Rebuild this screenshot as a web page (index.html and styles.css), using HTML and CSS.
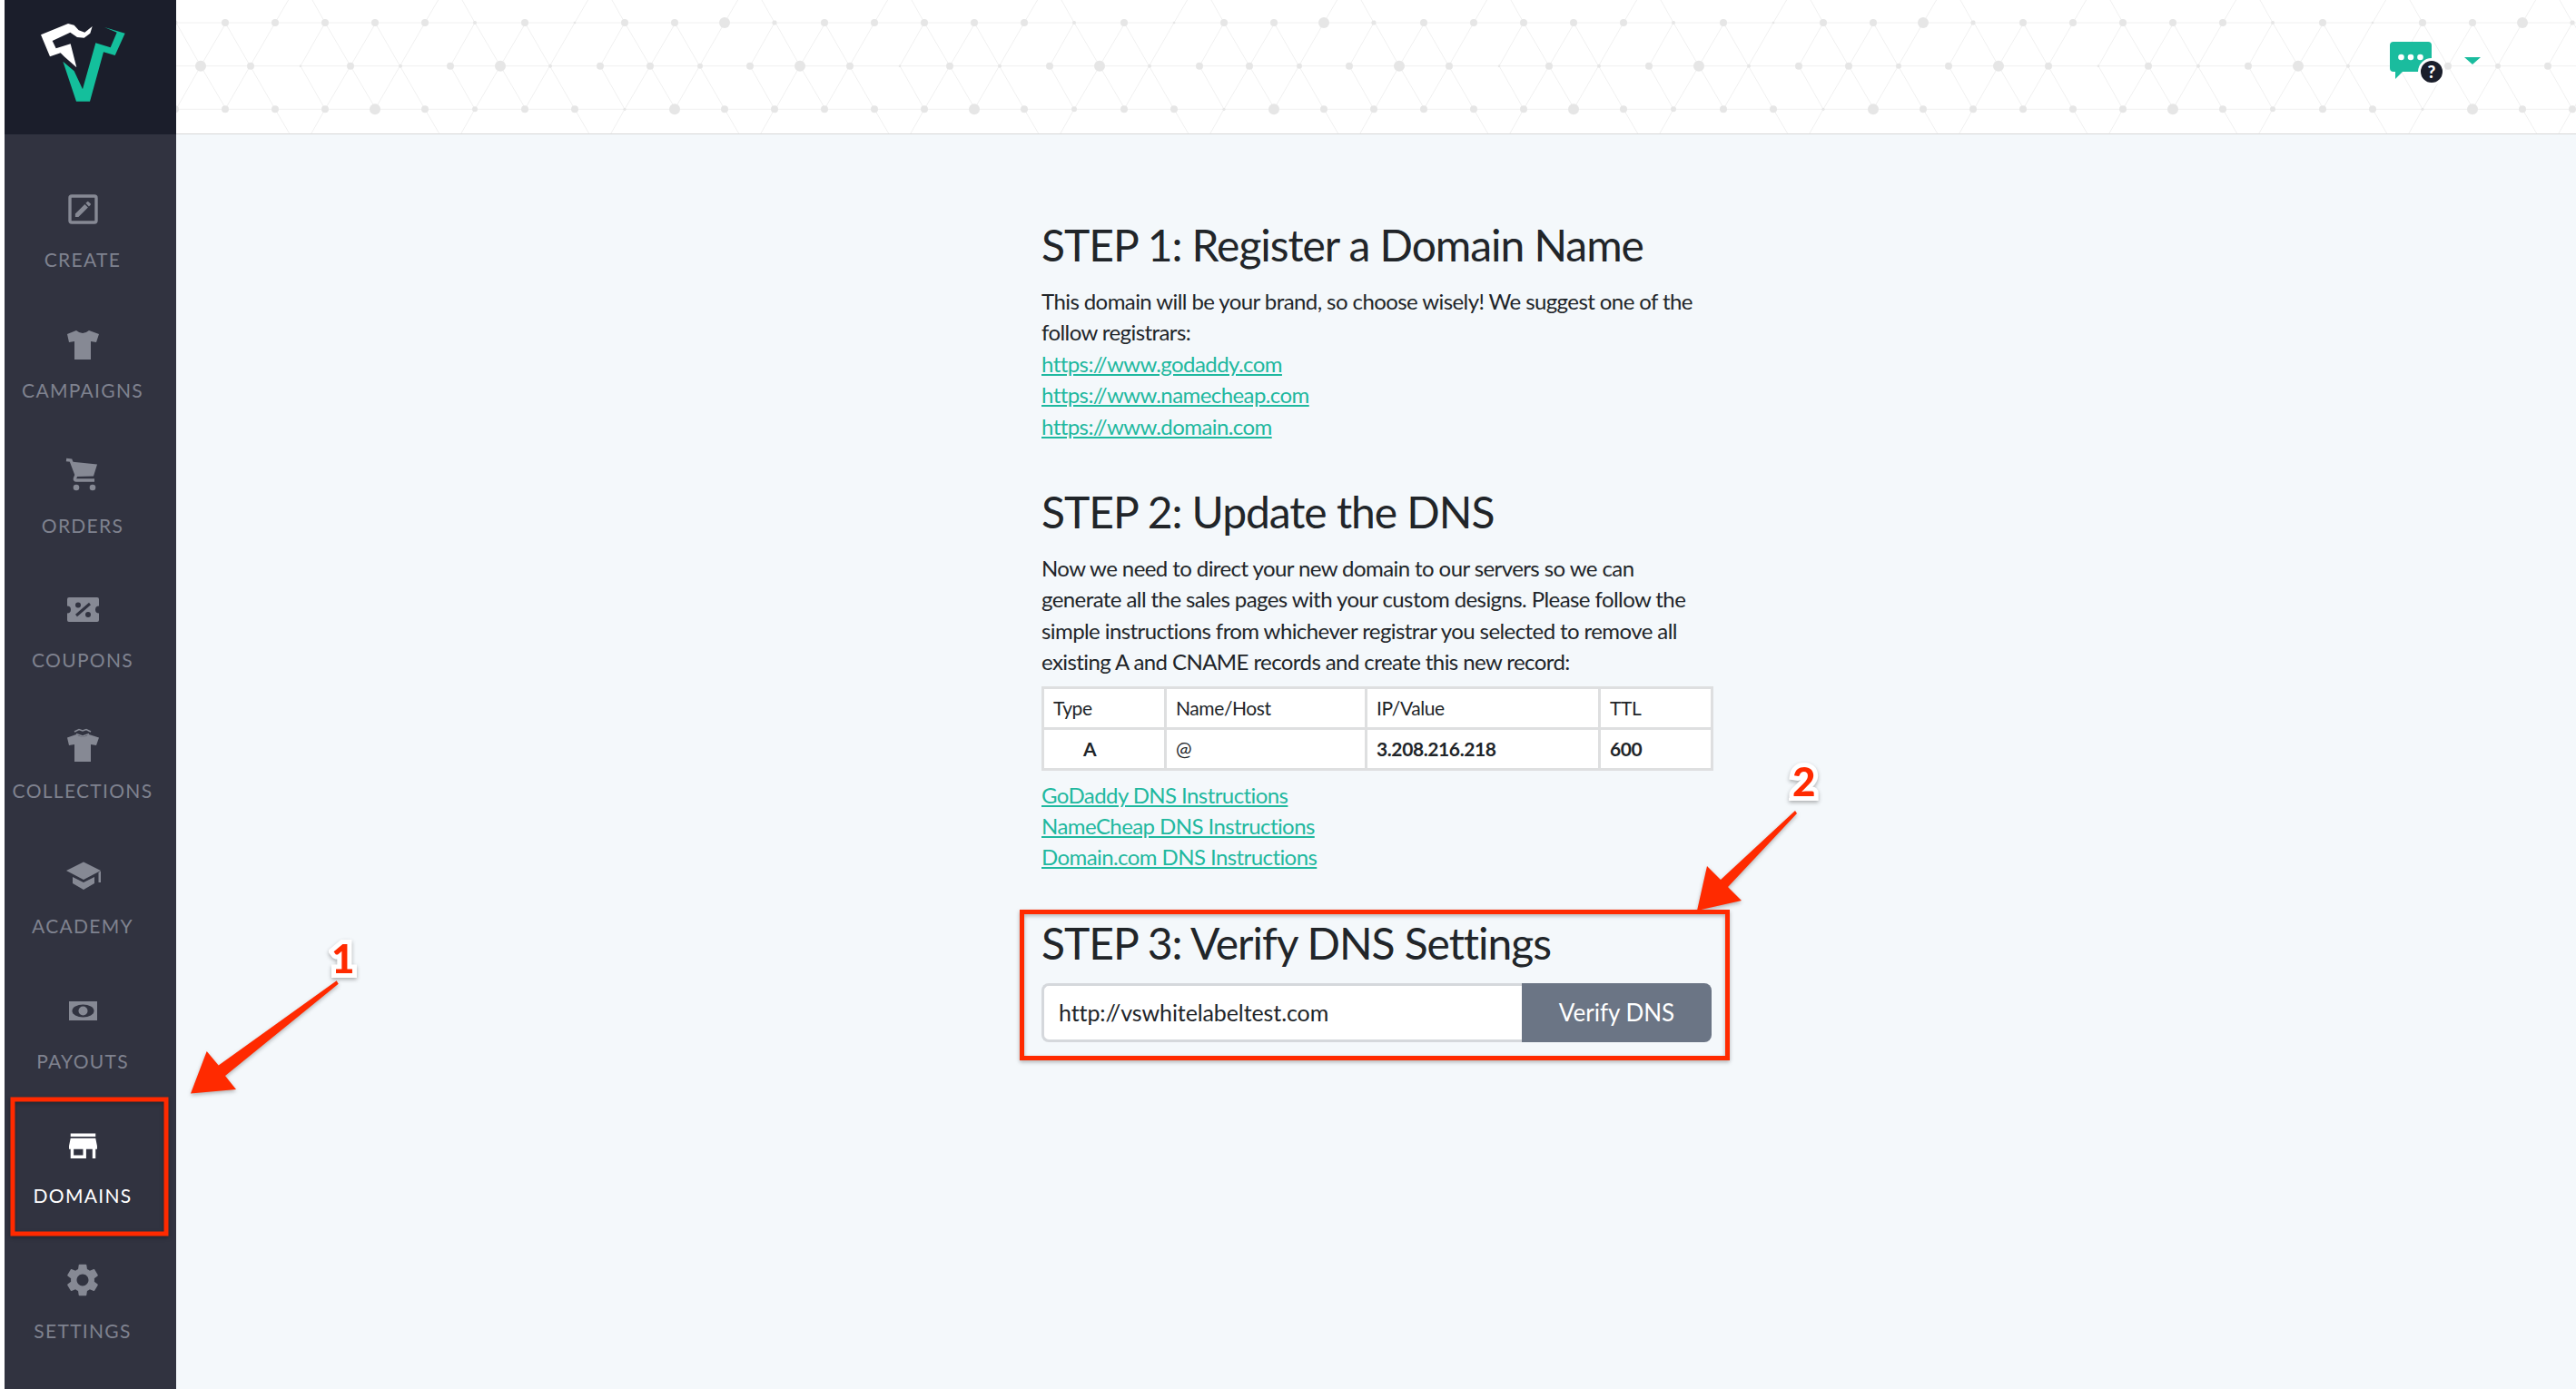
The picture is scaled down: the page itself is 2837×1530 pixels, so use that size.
FILE: index.html
```html
<!DOCTYPE html>
<html lang="en">
<head>
<meta charset="utf-8">
<title>Domains</title>
<link rel="stylesheet" href="styles.css">
</head>
<body>
<div class="app">
  <aside class="sidebar">
    <div class="brand">
      <svg class="logo" viewBox="0 0 360 330" aria-hidden="true">
        <path class="logo-white" d="M45 70L135 33L155 38L170 55L190 62L215 42L208 65L188 80L165 78L142 62L83 90L95 115L143 100L163 178L122 142L110 130L75 142Z"/>
        <path class="logo-green" d="M255 45L323 65L290 138L252 127L207 290L162 290L118 158L155 190L183 250L226 97L275 112L296 62Z"/>
      </svg>
    </div>
    <nav class="nav">
      <a class="nav-item">
        <svg class="icon" viewBox="0 0 44 44"><rect class="i-line" x="8" y="8" width="29" height="29" rx="2"/><path transform="translate(11 11) scale(.95)" d="M3 17.25V21h3.75L17.81 9.94l-3.75-3.75L3 17.25zM20.71 7.04a1 1 0 0 0 0-1.41l-2.34-2.34a1 1 0 0 0-1.41 0l-1.83 1.83 3.75 3.75 1.83-1.83z"/></svg>
        <span>CREATE</span>
      </a>
      <a class="nav-item short">
        <svg class="icon" viewBox="0 0 44 44"><path d="M15 12L5 16L7 25L13 24V44H31V24L37 25L40 16L29 12Q22 18 15 12Z"/></svg>
        <span>CAMPAIGNS</span>
      </a>
      <a class="nav-item">
        <svg class="icon" viewBox="0 0 44 44"><path d="M9 7.5L38 10.5L34 23.5L15 24Z"/><path class="i-line" d="M4 5.5L9 6L15 22L13.5 26Q13 28 15 28H35"/><circle cx="15" cy="36" r="3.3"/><circle cx="33" cy="36" r="3.3"/></svg>
        <span>ORDERS</span>
      </a>
      <a class="nav-item">
        <svg class="icon" viewBox="0 0 44 44"><path d="M7 9H38Q40 9 40 11V18.5A4 4 0 0 0 40 26.5V34Q40 36 38 36H7Q5 36 5 34V26.5A4 4 0 0 0 5 18.5V11Q5 9 7 9Z"/><path class="i-cut" d="M15 29L30 16"/><circle class="i-hole" cx="17" cy="17.5" r="3"/><circle class="i-hole" cx="28" cy="28" r="3"/></svg>
        <span>COUPONS</span>
      </a>
      <a class="nav-item short">
        <svg class="icon" viewBox="0 0 44 44"><path d="M15 16L5 19.5L7 28L13 27V46H31V27L37 28L40 19.5L29 16Q22 21 15 16Z"/><path class="i-thin" d="M13 13L18 10.500L22 12L26 10.500L31 13M15 15.500L22 18L29 15.500"/></svg>
        <span>COLLECTIONS</span>
      </a>
      <a class="nav-item">
        <svg class="icon" viewBox="0 0 44 44"><path d="M23 7.500L42 17L23 27L4 17Z"/><path d="M11 24L23 30L35 24V31L23 38L11 31Z"/><path d="M39.500 19L42 17.500V30H39.500Z"/></svg>
        <span>ACADEMY</span>
      </a>
      <a class="nav-item">
        <svg class="icon" viewBox="0 0 44 44"><rect x="7" y="12" width="31" height="21"/><ellipse class="i-hole" cx="22.500" cy="22.500" rx="12" ry="7"/><circle cx="22.500" cy="22.500" r="5"/></svg>
        <span>PAYOUTS</span>
      </a>
      <a class="nav-item active">
        <svg class="icon" viewBox="0 0 44 44"><path transform="translate(1.840 2.600) scale(1.72)" d="M20 4H4v2h16V4zm1 10v-2l-1-5H4l-1 5v2h1v6h10v-6h4v6h2v-6h1zm-9 4H6v-4h6v4z"/></svg>
        <span>DOMAINS</span>
      </a>
      <a class="nav-item">
        <svg class="icon" viewBox="0 0 44 44"><path transform="translate(.4 .4) scale(1.8)" d="M19.140 12.940c.04-.3.06-.61.06-.94 0-.32-.02-.64-.07-.94l2.030-1.580c.18-.14.23-.41.12-.61l-1.920-3.320c-.12-.22-.37-.29-.59-.22l-2.390.96c-.5-.38-1.030-.7-1.620-.94l-.36-2.540c-.04-.24-.24-.41-.48-.41h-3.840c-.24 0-.43.17-.47.41l-.36 2.540c-.59.24-1.130.57-1.620.94l-2.390-.96c-.22-.08-.47 0-.59.22L2.740 8.870c-.12.21-.08.47.12.61l2.030 1.580c-.05.3-.09.63-.09.94s.02.64.07.94l-2.030 1.580c-.18.14-.23.41-.12.61l1.920 3.320c.12.22.37.29.59.22l2.390-.96c.5.38 1.030.7 1.620.94l.36 2.540c.05.24.24.41.48.41h3.840c.24 0 .44-.17.47-.41l.36-2.540c.59-.24 1.130-.56 1.620-.94l2.390.96c.22.08.47 0 .59-.22l1.920-3.320c.12-.22.07-.47-.12-.61l-2.010-1.580zM12 15.600c-1.980 0-3.600-1.620-3.600-3.600s1.620-3.600 3.600-3.600 3.600 1.620 3.600 3.600-1.620 3.600-3.600 3.600z"/></svg>
        <span>SETTINGS</span>
      </a>
    </nav>
  </aside>

  <div class="main">
    <header class="topbar">
      <svg class="hex" aria-hidden="true">
        <defs>
          <pattern id="hexTile" patternUnits="userSpaceOnUse" width="660" height="147">
            <g class="hex-lines">
              <path d="M0 25H660M0 72.700H660M0 120.300H660"/>
              <path d="M54 25L109 120.300M109 25L54 120.300M219 25L274 120.300M274 25L219 120.300M384 25L439 120.300M439 25L384 120.300M549 25L604 120.300M604 25L549 120.300"/>
              <path d="M137 72.700L164 25L192 72.700L220 120.300M137 72.700L164 120.300L192 72.700L220 25M109 25L137 -23M164 25L137 -23M274 25L302 -23M329 25L302 -23M439 25L467 -23M494 25L467 -23M604 25L632 -23M659 25L632 -23"/>
              <path d="M302 72.700L329 25L357 72.700L385 120.300M302 72.700L329 120.300L357 72.700L385 25M467 72.700L494 25L522 72.700L550 120.300M467 72.700L494 120.300L522 72.700L550 25M632 72.700L659 25L660 27M632 72.700L659 120.300L660 118M0 25L27 72.700L55 120.300M0 120.300L27 72.700L55 25"/>
              <path d="M109 120.300L137 168M164 120.300L137 168M274 120.300L302 168M329 120.300L302 168M439 120.300L467 168M494 120.300L467 168M604 120.300L632 168M659 120.300L632 168"/>
            </g>
            <g class="hex-dots">
              <circle cx="54" cy="25" r="4"/><circle cx="109" cy="25" r="4"/><circle cx="164" cy="25" r="4"/><circle cx="219" cy="25" r="4"/><circle cx="274" cy="25" r="4"/><circle cx="329" cy="25" r="2"/><circle cx="384" cy="25" r="4"/><circle cx="439" cy="25" r="1.300"/><circle cx="494" cy="25" r="4"/><circle cx="549" cy="25" r="4"/><circle cx="604" cy="25" r="6"/><circle cx="659" cy="25" r="2.600"/><circle cx="-1" cy="25" r="2.600"/>
              <circle cx="27" cy="72.700" r="6"/><circle cx="82" cy="72.700" r="4"/><circle cx="137" cy="72.700" r="1.300"/><circle cx="192" cy="72.700" r="4"/><circle cx="247" cy="72.700" r="2"/><circle cx="302" cy="72.700" r="4"/><circle cx="357" cy="72.700" r="6"/><circle cx="412" cy="72.700" r="2"/><circle cx="467" cy="72.700" r="4"/><circle cx="522" cy="72.700" r="4"/><circle cx="577" cy="72.700" r="3"/><circle cx="632" cy="72.700" r="4"/>
              <circle cx="54" cy="120.300" r="4"/><circle cx="109" cy="120.300" r="4"/><circle cx="164" cy="120.300" r="4"/><circle cx="219" cy="120.300" r="6"/><circle cx="274" cy="120.300" r="4"/><circle cx="329" cy="120.300" r="3"/><circle cx="384" cy="120.300" r="4"/><circle cx="439" cy="120.300" r="4"/><circle cx="494" cy="120.300" r="1.600"/><circle cx="549" cy="120.300" r="6"/><circle cx="604" cy="120.300" r="4"/><circle cx="659" cy="120.300" r="4"/><circle cx="-1" cy="120.300" r="4"/>
            </g>
          </pattern>
        </defs>
        <rect class="hex-fill" width="100%" height="100%"/>
      </svg>
      <div class="top-actions">
        <svg class="chat" viewBox="0 0 62 46" aria-hidden="true">
          <path class="teal" d="M4 0H42Q46 0 46 4V29Q46 33 42 33H14L6 41V33H4Q0 33 0 29V4Q0 0 4 0Z"/>
          <circle class="white" cx="12.500" cy="17" r="3.300"/><circle class="white" cx="23" cy="17" r="3.300"/><circle class="white" cx="33.500" cy="17" r="3.300"/>
          <circle class="ring" cx="46" cy="33" r="13.500"/>
        </svg>
        <span class="help">?</span>
        <span class="caret"></span>
      </div>
    </header>

    <div class="content">
      <section class="step">
        <h2>STEP 1: Register a Domain Name</h2>
        <p>This domain will be your brand, so choose wisely! We suggest one of the follow registrars:<br>
        <a href="#">https://www.godaddy.com</a><br>
        <a href="#">https://www.namecheap.com</a><br>
        <a href="#">https://www.domain.com</a></p>
      </section>
      <section class="step">
        <h2>STEP 2: Update the DNS</h2>
        <p>Now we need to direct your new domain to our servers so we can generate all the sales pages with your custom designs. Please follow the simple instructions from whichever registrar you selected to remove all existing A and CNAME records and create this new record:</p>
        <table class="dns">
          <colgroup><col class="c1"><col class="c2"><col class="c3"><col class="c4"></colgroup>
          <tr class="head"><td>Type</td><td>Name/Host</td><td>IP/Value</td><td>TTL</td></tr>
          <tr class="vals"><td class="type-a">A</td><td>@</td><td class="strong">3.208.216.218</td><td class="strong">600</td></tr>
        </table>
        <p class="guides">
          <a href="#">GoDaddy DNS Instructions</a><br>
          <a href="#">NameCheap DNS Instructions</a><br>
          <a href="#">Domain.com DNS Instructions</a>
        </p>
      </section>
      <section class="step last">
        <h2>STEP 3: Verify DNS Settings</h2>
        <form class="verify">
          <input class="verify-input" type="text" value="http://vswhitelabeltest.com">
          <button class="verify-btn" type="button">Verify DNS</button>
        </form>
      </section>
    </div>
  </div>
</div>

<svg class="annotations" viewBox="0 0 2837 1530" aria-hidden="true">
  <g class="red">
    <rect class="box" x="14" y="1211" width="169" height="148"/>
    <rect class="box" x="1125.500" y="1004.500" width="777" height="161"/>
    <path d="M210 1204.500L227.700 1158L240.700 1173.400L370.700 1080.300L372.700 1083.800L248 1185L260 1200Z"/>
    <path d="M1869 1003L1880 954L1895 969L1977 893L1979 896L1903 977L1918 992Z"/>
  </g>
</svg>
<span class="badge badge-one">1</span>
<span class="badge badge-two">2</span>
</body>
</html>
```

FILE: styles.css
```css
* { box-sizing: border-box; }
html, body { margin: 0; padding: 0; background: #fff; }
body {
  width: 2837px;
  height: 1530px;
  overflow: hidden;
  position: relative;
  font-family: Lato, "Liberation Sans", sans-serif;
  color: #212529;
}
.app { display: flex; height: 1530px; padding-left: 5px; }

.sidebar { width: 189px; flex: none; background: #313340; display: flex; flex-direction: column; }
.brand { height: 148px; background: #1b1e2b; padding: 15px 0 0 25px; }
.logo { display: block; width: 120px; height: 110px; }
.logo-white { fill: #fff; }
.logo-green { fill: #14bf9c; }

.nav { padding: 30px 17px 0 0; display: flex; flex-direction: column; }
.nav-item {
  height: 148.7px;
  padding-top: 30px;
  display: flex;
  flex-direction: column;
  align-items: center;
  gap: 22px;
  flex: none;
  color: #7f828f;
  fill: #868994;
  font-size: 21px;
  line-height: 24px;
  letter-spacing: 1.3px;
  text-decoration: none;
  white-space: nowrap;
}
.nav-item span { display: block; }
.nav-item.short { margin-top: -4.7px; }
.nav-item.active { color: #fff; fill: #fff; }
.icon { width: 44px; height: 44px; flex: none; overflow: visible; }
.i-line { fill: none; stroke: #868994; stroke-width: 3.4; }
.i-cut { fill: none; stroke: #313340; stroke-width: 3; }
.i-hole { fill: #313340; }
.i-thin { fill: none; stroke: #868994; stroke-width: 1.6; }

.main { flex: 1; min-width: 0; background: #f4f8fb; display: flex; flex-direction: column; }
.topbar {
  position: relative;
  height: 148px;
  flex: none;
  background: #fff;
  border-bottom: 1px solid #d8d8d8;
  display: flex;
  justify-content: flex-end;
}
.hex { position: absolute; inset: 0; width: 100%; height: 147px; }
.hex-fill { fill: url(#hexTile); }
.hex-lines path { fill: none; stroke: #f0f0f0; stroke-width: 1; }
.hex-dots circle { fill: #e6e6e6; }

.top-actions { position: relative; display: flex; align-items: flex-start; padding: 46px 105px 0 0; }
.chat { width: 62px; height: 46px; flex: none; overflow: visible; }
.teal { fill: #1abc9e; }
.white { fill: #fff; }
.ring { fill: #1a1e2b; stroke: #fff; stroke-width: 3; }
.help {
  position: absolute;
  left: 34px;
  top: 68px;
  width: 24px;
  text-align: center;
  font-size: 19px;
  line-height: 22px;
  font-weight: 900;
  color: #fff;
}
.caret {
  margin: 17px 0 0 20px;
  width: 0;
  height: 0;
  flex: none;
  border-left: 9px solid transparent;
  border-right: 9px solid transparent;
  border-top: 8px solid #1abc9e;
}

.content { width: 738px; margin: 0 0 0 953px; padding-top: 92px; }
.step + .step { margin-top: 47px; }
.step.last { margin-top: 47px; }
h2 { margin: 0 0 15px; font-size: 48px; line-height: 60px; font-weight: 400; letter-spacing: -1.05px; color: #212529; }
p { margin: 0; font-size: 24px; line-height: 34.4px; letter-spacing: -.58px; color: #212529; }
a { color: #1fb89f; text-decoration: underline; }

.dns { width: 737px; margin-top: 9px; border-collapse: collapse; table-layout: fixed; background: #fff; font-size: 21px; }
.c1 { width: 135px; }
.c2 { width: 221px; }
.c3 { width: 257px; }
.c4 { width: 124px; }
.dns td { border: 3px solid #dedfe0; padding: 0 0 0 10px; letter-spacing: -.4px; }
.dns .head { height: 45px; }
.dns .vals { height: 45px; }
.dns .type-a { padding-left: 43px; font-weight: 700; }
.dns .strong { font-weight: 700; }
.guides { margin-top: 10px; }

.verify { display: flex; height: 65px; margin-top: -1px; }
.verify-input {
  width: 529px;
  height: 65px;
  flex: none;
  border: 3px solid #d5d8dc;
  border-right: 0;
  border-radius: 8px 0 0 8px;
  background: #fff;
  padding: 0 0 0 16px;
  font: 400 25px Lato, sans-serif;
  color: #212529;
  letter-spacing: -.1px;
  outline: none;
}
.verify-btn {
  flex: 1;
  height: 65px;
  border: 0;
  border-radius: 0 8px 8px 0;
  background: #6b7585;
  color: #fff;
  font: 400 26px Lato, sans-serif;
  letter-spacing: 0;
  padding: 0;
}

.annotations { position: absolute; left: 0; top: 0; width: 2837px; height: 1530px; pointer-events: none; }
.red { fill: #ff2a00; filter: drop-shadow(0 2px 2px rgba(0, 0, 0, .28)); }
.box { fill: none; stroke: #ff2a00; stroke-width: 5; }
.badge {
  position: absolute;
  font: 900 44px/48px Lato, sans-serif;
  color: #ff2a00;
  -webkit-text-stroke: 10px #fff;
  paint-order: stroke fill;
  filter: drop-shadow(0 2px 2px rgba(0, 0, 0, .3));
}
.badge-one { left: 365px; top: 1031px; }
.badge-two { left: 1974px; top: 836px; }
```
